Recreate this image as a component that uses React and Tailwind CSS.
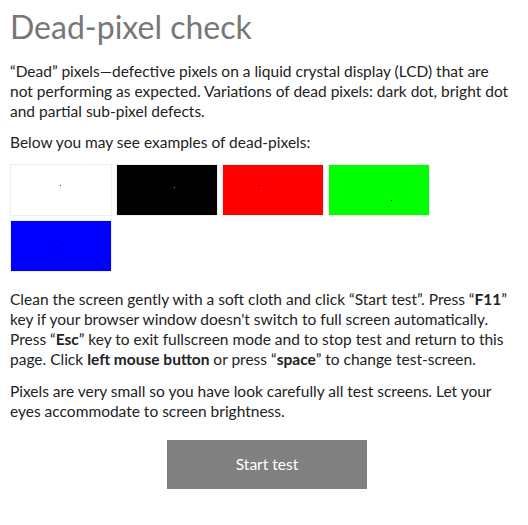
const swatches = [
  { bg: 'bg-white', dot: 'bg-[#ff0000]', pos: 'left-[49px] top-[20px]' },
  { bg: 'bg-black', dot: 'bg-[#5b8bd6]', pos: 'left-[57px] top-[22px]' },
  { bg: 'bg-[#ff0000]', dot: 'bg-black', pos: 'left-[36px] top-[20px]' },
  { bg: 'bg-[#00ff00]', dot: 'bg-black', pos: 'left-[62px] top-[35px]' },
  { bg: 'bg-[#0000ff]', dot: 'bg-black', pos: 'left-[52px] top-[23px]' },
];

export default function App() {
  return (
    <div className="bg-white min-h-[525px] px-[10px] pt-[7px] text-[#222] font-['Lato',sans-serif]">
      <h1 className="text-[32px] leading-[40px] text-[#777] font-normal">Dead-pixel check</h1>

      <p className="mt-[14px] max-w-[505px] text-[15.5px] leading-5">
        “Dead” pixels—defective pixels on a liquid crystal display (LCD) that are not performing as expected. Variations of dead pixels: dark dot, bright dot and partial sub-pixel defects.
      </p>

      <p className="mt-[11px] text-[15.5px] leading-5">Below you may see examples of dead-pixels:</p>

      {/* sample screens */}
      <div className="mt-[12px] flex flex-wrap gap-[4px] w-[430px]">
        {swatches.map((s, i) => (
          <div key={i} className={`relative w-[102px] h-[52px] border border-[#eee] ${s.bg}`}>
            <div className={`absolute w-px h-px ${s.dot} ${s.pos}`} />
          </div>
        ))}
      </div>

      <p className="mt-[17px] text-[15.5px] leading-5">
        Clean the screen gently with a soft cloth and click “Start test”. Press “<b>F11</b>” key if your browser window doesn't switch to full screen automatically. Press “<b>Esc</b>” key to exit fullscreen mode and to stop test and return to this page. Click <b>left mouse button</b> or press “<b>space</b>” to change test-screen.
      </p>

      <p className="mt-[12px] text-[15.5px] leading-5">
        Pixels are very small so you have look carefully all test screens. Let your eyes accommodate to screen brightness.
      </p>

      <div className="mt-[19px] pl-[6px] flex justify-center">
        <button className="w-[200px] h-[49px] bg-[#808080] text-white text-[15.5px]">Start test</button>
      </div>
    </div>
  );
}
